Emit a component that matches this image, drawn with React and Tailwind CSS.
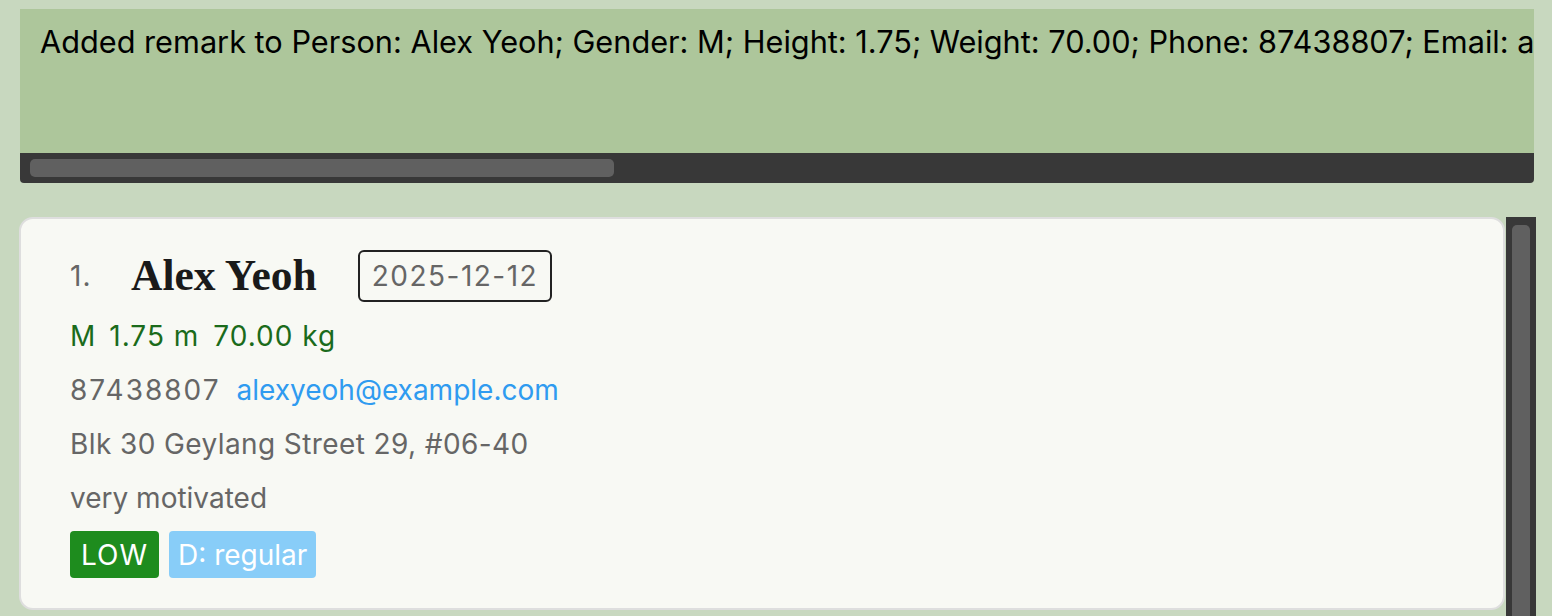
import React from "react";

const sans = { fontFamily: "Inter, 'Noto Sans', sans-serif" };

const ResultDisplay = () => (
  <div className="ml-[20px] mr-[18px] mt-[9px] h-[174px] rounded-b-[4px] overflow-hidden flex flex-col">
    <div className="flex-1 bg-[#adc69b] pl-[20px] pt-[14px] overflow-hidden whitespace-nowrap">
      <p className="text-[30.7px] leading-[38px] text-black">
        Added remark to Person: Alex Yeoh; Gender: M; Height: 1.75; Weight: 70.00; Phone: 87438807; Email: alexyeoh@example.com; Address: Blk 30 Geylang Street 29, #06-40
      </p>
    </div>
    <div className="h-[30px] bg-[#383838] px-[10px] py-[6px]">
      <div className="w-[584px] h-full rounded-[5px] bg-[#606060]" />
    </div>
  </div>
);

const PersonCard = () => (
  <div className="flex-1 bg-[#f8f9f4] border-2 border-[#dedede] rounded-[14px] pl-[49px] pt-[30px] pb-[30px]">
    <div className="flex items-center h-[54px]">
      <span className="text-[28px] text-[#666] w-[61px] tracking-[1px]">1.</span>
      <span className="text-[43.5px] font-bold text-[#1a1a1a]" style={{ fontFamily: "'Liberation Serif', serif" }}>
        Alex Yeoh
      </span>
      <span className="ml-[41px] border-2 border-[#222] rounded-[6px] px-[12px] h-[52px] flex items-center text-[28px] text-[#666] tracking-[1.5px]">
        2025-12-12
      </span>
    </div>
    <div className="flex gap-[14px] text-[28px] leading-[54px] text-[#1b6b1b] mt-[6px]">
      <span>M</span>
      <span className="tracking-[1px]">1.75 m</span>
      <span className="tracking-[1px]">70.00 kg</span>
    </div>
    <div className="flex gap-[16px] text-[28px] leading-[54px]">
      <span className="text-[#666] tracking-[2px]">87438807</span>
      <span className="text-[#2f9bf0]">alexyeoh@example.com</span>
    </div>
    <p className="text-[28px] leading-[54px] text-[#666] tracking-[0.4px]">Blk 30 Geylang Street 29, #06-40</p>
    <p className="text-[28px] leading-[54px] text-[#666]">very motivated</p>
    <div className="flex gap-[10px] mt-[6px]">
      <span className="bg-[#1e8c1e] text-white text-[28px] rounded-[4px] px-[11px] h-[47px] flex items-center tracking-[1px]">LOW</span>
      <span className="bg-[#88cdf8] text-white text-[28px] rounded-[4px] px-[9px] h-[47px] flex items-center">D: regular</span>
    </div>
  </div>
);

export default function App() {
  return (
    <div className="w-[1552px] h-[616px] bg-[#c8d8bf] overflow-hidden" style={sans}>
      <ResultDisplay />
      <div className="flex items-start mt-[34px] ml-[19px] mr-[16px]">
        <PersonCard />
        <div className="w-[30px] h-[420px] ml-px bg-[#383838] px-[6px] pt-[8px]">
          <div className="h-[410px] rounded-[5px] bg-[#606060]" />
        </div>
      </div>
    </div>
  );
}
